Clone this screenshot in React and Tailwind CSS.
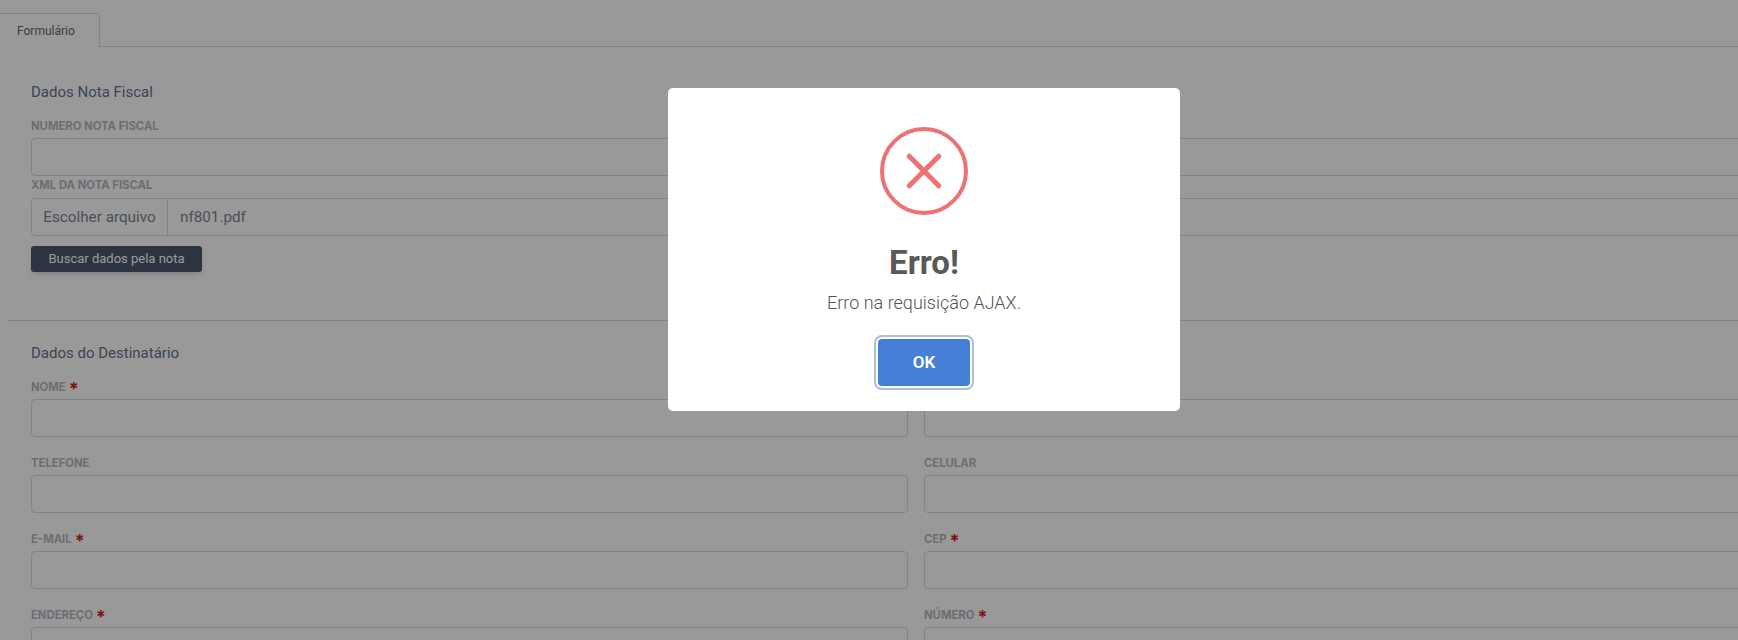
import React from "react";

function Field({ label, required, className = "" }) {
  return (
    <div className={className}>
      <label className="block h-[13px] text-[11.3px] leading-[12px] font-bold uppercase text-[#b2b8c1] whitespace-nowrap font-['Inter',sans-serif]">
        {label}
        {required && <span className="ml-[3px] text-[#d81f1f] text-[18px] leading-[0] align-[-4px]">*</span>}
      </label>
      <input
        type="text"
        className="block w-full h-[38px] mt-[5px] border border-[#d8dbe0] rounded-[4px] bg-white"
      />
    </div>
  );
}

function ErrorIcon() {
  return (
    <svg width="88" height="88" viewBox="0 0 88 88" fill="none" className="block">
      <circle cx="44" cy="44" r="42" stroke="#ee7272" strokeWidth="4" />
      <path
        d="M29.25 29.25 L58.75 58.75 M58.75 29.25 L29.25 58.75"
        stroke="#ee7272"
        strokeWidth="5"
        strokeLinecap="round"
      />
    </svg>
  );
}

function App() {
  return (
    <div
      className="relative h-[640px] w-full overflow-hidden bg-white"
      style={{ fontFamily: 'Roboto, sans-serif' }}
    >
      <div className="w-[1832px]">
        {/* tabs */}
        <div className="flex h-[47px] pt-[13px] border-b border-[#d8dbe0]">
          <div className="w-[101px] h-[34px] -ml-px bg-white border border-[#d8dbe0] border-b-0 rounded-tr-[4px] pl-[17px] pt-[9px] text-[12px] leading-[16px] text-[#5d6a7c]">
            Formulário
          </div>
        </div>

        <div className="px-[31px]">
          <h5 className="mt-[36px] h-[18px] text-[15px] leading-[18px] text-[#64748b]">Dados Nota Fiscal</h5>
          <Field label="Numero nota fiscal" className="mt-[19px]" />
          <div className="mt-[3px]">
            <label className="block h-[13px] text-[11.3px] leading-[12px] font-bold uppercase text-[#b2b8c1] font-['Inter',sans-serif]">
              XML da nota fiscal
            </label>
            <div className="flex items-center h-[38px] mt-[6px] border border-[#d8dbe0] rounded-[4px] text-[15.25px] text-[#7b8696]">
              <span className="h-full flex items-center w-[136px] justify-center border-r border-[#d8dbe0]">Escolher arquivo</span>
              <span className="px-[12px]">nf801.pdf</span>
            </div>
          </div>
          <button className="block w-[171px] h-[26px] mt-[10px] rounded-[3px] bg-[#49576b] text-white text-[13px] shadow-md">
            Buscar dados pela nota
          </button>
        </div>

        <div className="ml-[7px] mt-[48px] border-t border-[#d8dbe0]" />

        <div className="px-[31px]">
          <h5 className="mt-[23px] h-[18px] text-[15px] leading-[18px] text-[#64748b]">Dados do Destinatário</h5>
          <div className="grid grid-cols-2 gap-x-[16px] gap-y-[20px] mt-[19px]">
            <Field label="Nome" required />
            <Field label="" />
            <Field label="Telefone" />
            <Field label="Celular" />
            <Field label="E-mail" required />
            <Field label="CEP" required />
            <Field label="Endereço" required />
            <Field label="Número" required />
          </div>
        </div>
      </div>

      {/* modal */}
      <div className="absolute inset-0 bg-black/40 pl-[668px] pt-[88px]">
        <div className="w-[512px] h-[323px] bg-white rounded-[5px] flex flex-col items-center pt-[39px]">
          <ErrorIcon />
          <h2 className="mt-[29px] text-[33px] leading-[38px] font-bold text-[#595959]">Erro!</h2>
          <p className="mt-[9px] text-[18px] leading-[24px] font-light text-[#545454]">Erro na requisição AJAX.</p>
          <button className="mt-[24px] w-[92px] h-[47px] rounded-[4px] bg-[#4680d6] text-white font-semibold text-[17px] shadow-[0_0_0_2px_#fff,0_0_0_4px_rgba(50,100,150,0.4)]">
            OK
          </button>
        </div>
      </div>
    </div>
  );
}

export default App;
